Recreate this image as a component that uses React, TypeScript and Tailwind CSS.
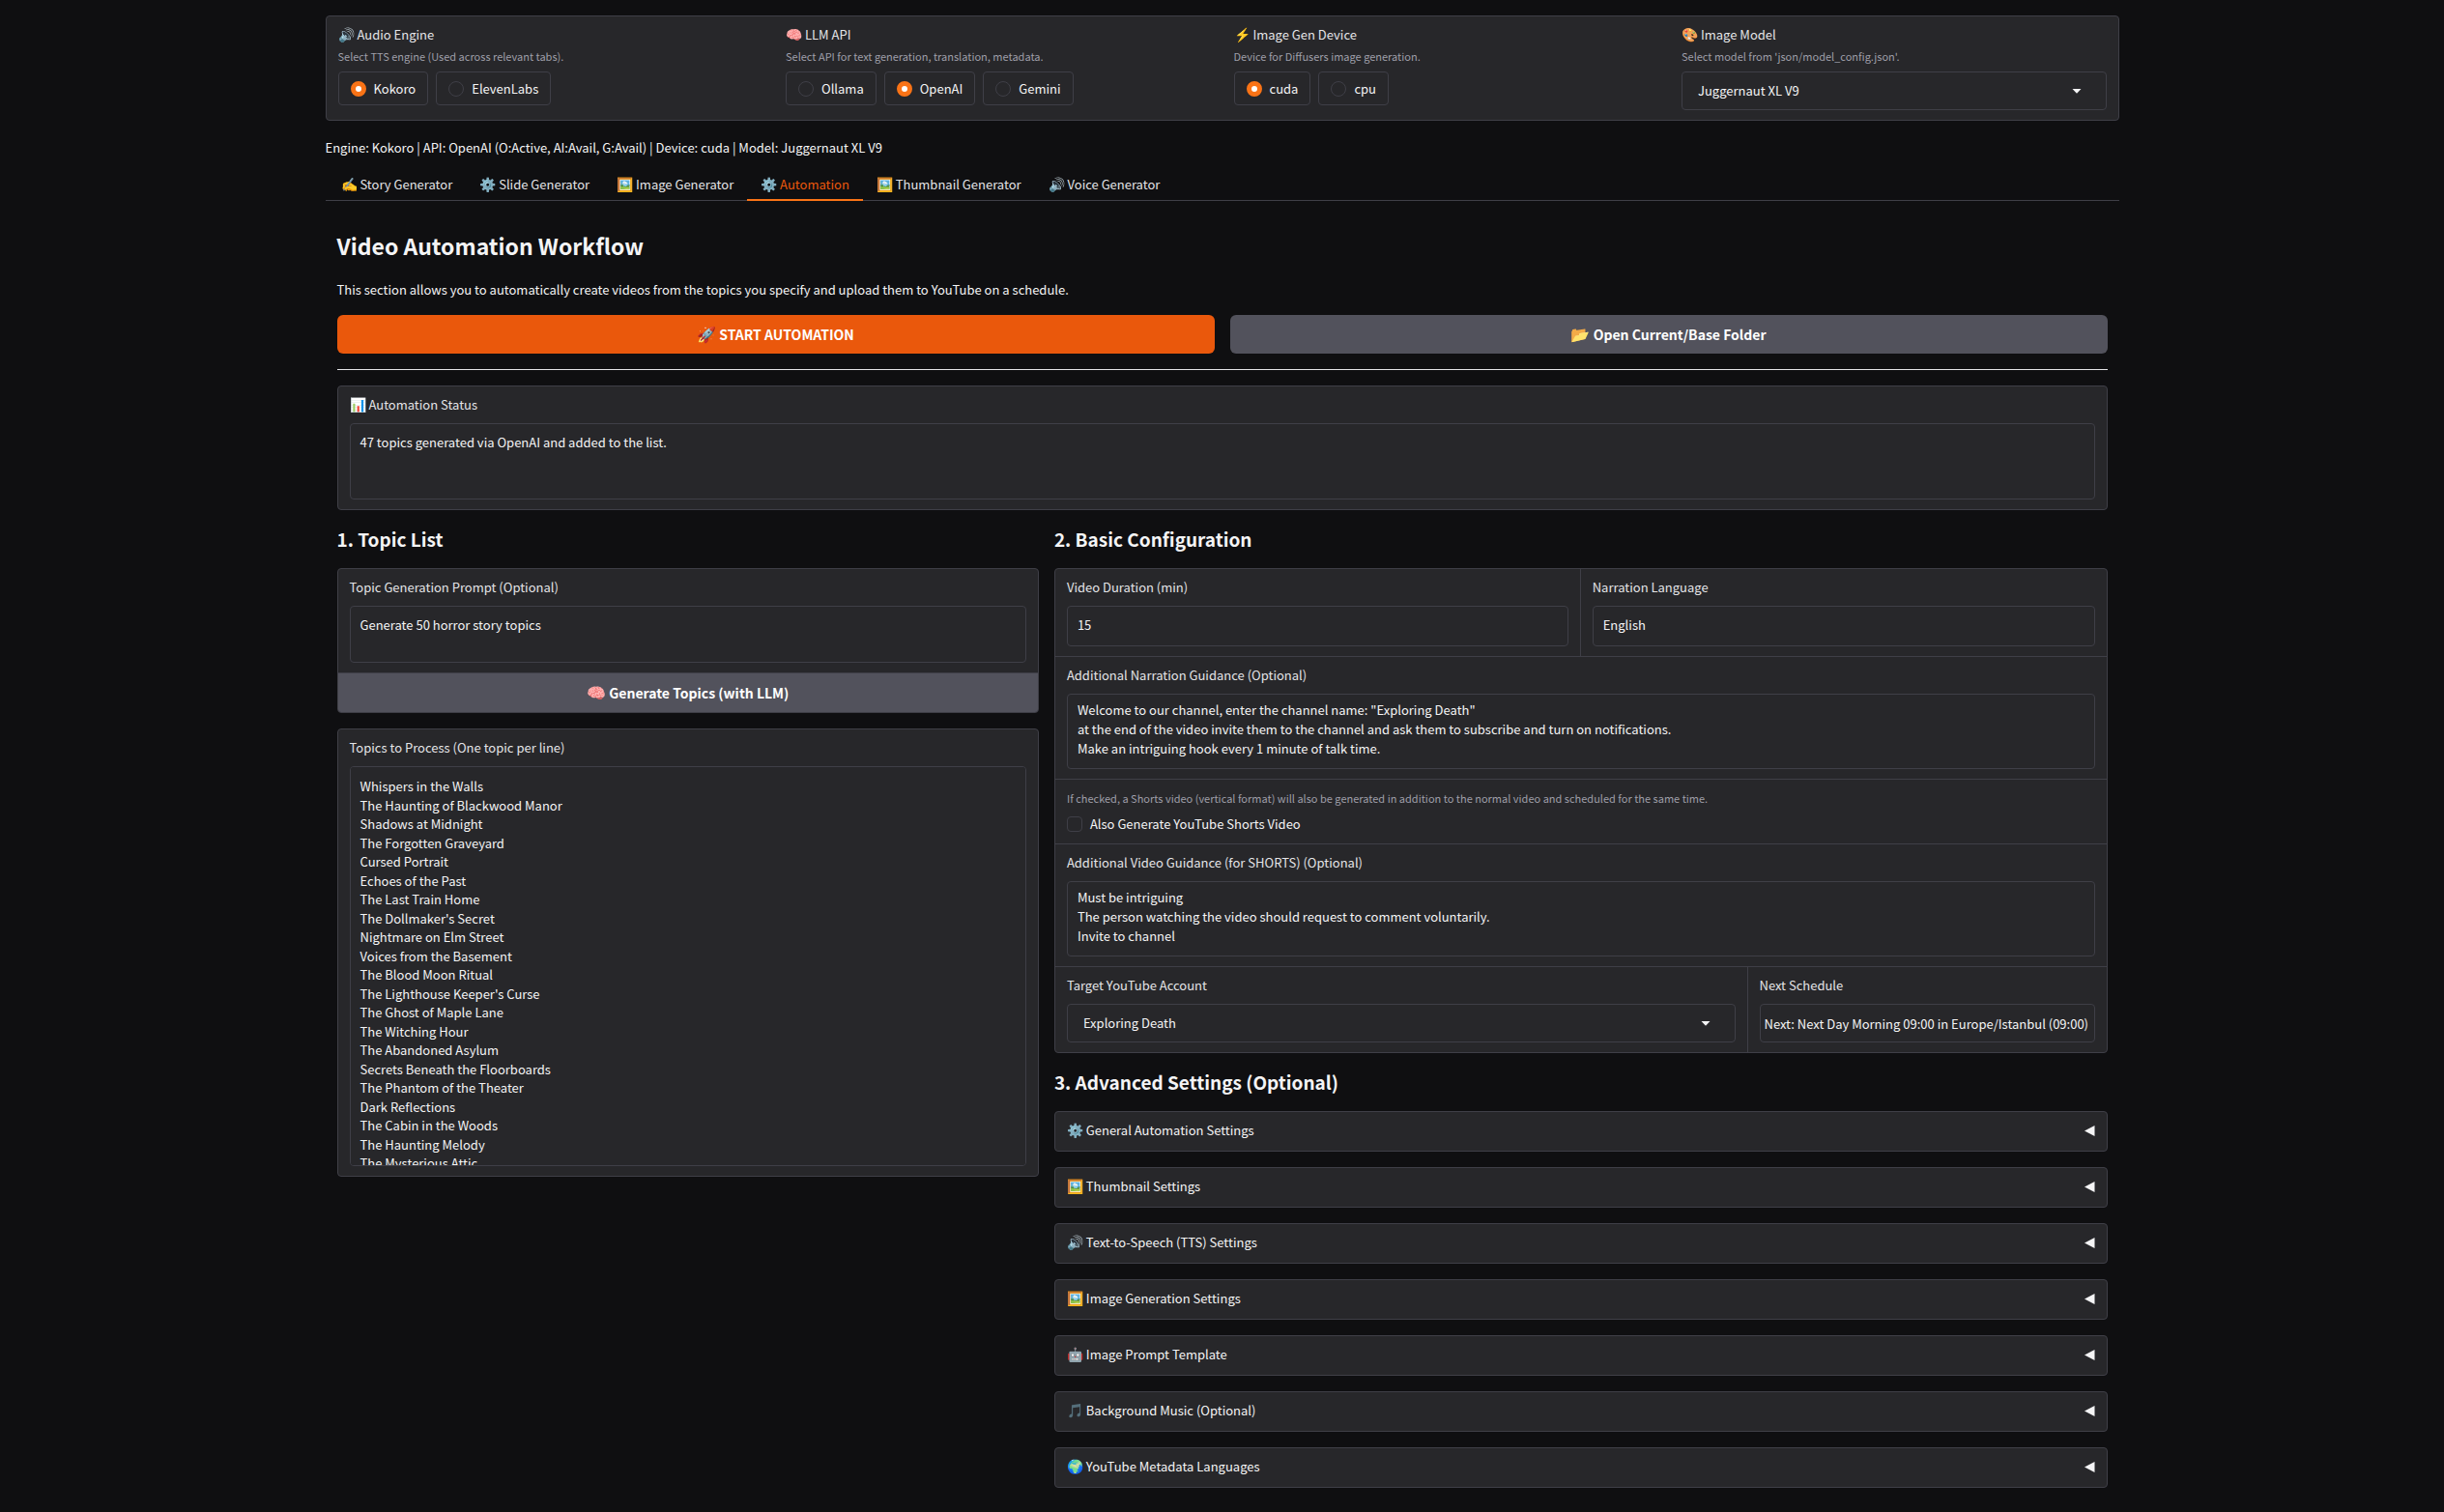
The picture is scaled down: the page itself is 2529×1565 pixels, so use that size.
import { useState, type ReactNode } from 'react';

const TABS = [
  { icon: '✍️', name: 'Story Generator' },
  { icon: '⚙️', name: 'Slide Generator' },
  { icon: '🖼️', name: 'Image Generator' },
  { icon: '⚙️', name: 'Automation' },
  { icon: '🖼️', name: 'Thumbnail Generator' },
  { icon: '🔊', name: 'Voice Generator' },
];

const TOPICS = [
  'Whispers in the Walls',
  'The Haunting of Blackwood Manor',
  'Shadows at Midnight',
  'The Forgotten Graveyard',
  'Cursed Portrait',
  'Echoes of the Past',
  'The Last Train Home',
  "The Dollmaker's Secret",
  'Nightmare on Elm Street',
  'Voices from the Basement',
  'The Blood Moon Ritual',
  "The Lighthouse Keeper's Curse",
  'The Ghost of Maple Lane',
  'The Witching Hour',
  'The Abandoned Asylum',
  'Secrets Beneath the Floorboards',
  'The Phantom of the Theater',
  'Dark Reflections',
  'The Cabin in the Woods',
  'The Haunting Melody',
  'The Mysterious Attic',
];

const NARRATION = `Welcome to our channel, enter the channel name: "Exploring Death"
at the end of the video invite them to the channel and ask them to subscribe and turn on notifications.
Make an intriguing hook every 1 minute of talk time.`;

const SHORTS = `Must be intriguing
The person watching the video should request to comment voluntarily.
Invite to channel`;

const ADVANCED = [
  { icon: '⚙️', title: 'General Automation Settings' },
  { icon: '🖼️', title: 'Thumbnail Settings' },
  { icon: '🔊', title: 'Text-to-Speech (TTS) Settings' },
  { icon: '🖼️', title: 'Image Generation Settings' },
  { icon: '🤖', title: 'Image Prompt Template' },
  { icon: '🎵', title: 'Background Music (Optional)' },
  { icon: '🌍', title: 'YouTube Metadata Languages' },
];

const card = 'overflow-hidden rounded border border-zinc-700 bg-zinc-800';
const field = 'block w-full rounded border border-zinc-700 bg-zinc-800 text-zinc-100 outline-none focus:border-orange-500';
const input = `${field} px-2.5 pt-[9px] pb-[11px]`;
const area = `${field} resize-none px-2.5 leading-5 [scrollbar-width:none]`;
const action = 'text-[14px] font-semibold text-white';
const heading = 'mb-4 text-[19px] leading-7 font-semibold';

function Emoji({ children }: { children: string }) {
  return <span className="text-[14px] leading-none">{children}</span>;
}

interface FieldProps {
  id: string;
  icon?: string;
  label: string;
  info?: string;
  children: ReactNode;
}

function Field({ id, icon, label, info, children }: FieldProps) {
  return (
    <div className="px-3 py-2.5">
      <label htmlFor={id} className={`block leading-[18px] text-zinc-200 ${info ? 'mb-1.5' : 'mb-2.5'}`}>
        {icon && <Emoji>{icon}</Emoji>} {label}
      </label>
      {info && <p className="mb-2 text-[11px] leading-[15px] text-zinc-400">{info}</p>}
      {children}
    </div>
  );
}

interface RadioFieldProps {
  name: string;
  icon: string;
  label: string;
  info: string;
  options: string[];
  initial: string;
}

function RadioField({ name, icon, label, info, options, initial }: RadioFieldProps) {
  const [value, setValue] = useState(initial);

  return (
    <fieldset className="px-3 py-2.5">
      <legend className="float-left mb-1.5 w-full leading-[18px] text-zinc-200">
        <Emoji>{icon}</Emoji> {label}
      </legend>
      <p className="clear-both mb-2 text-[11px] leading-[15px] text-zinc-400">{info}</p>
      <div className="flex flex-wrap gap-2">
        {options.map((option) => (
          <label key={option} className="flex h-[35px] items-center gap-2 rounded border border-zinc-700 px-3 text-zinc-100">
            <input
              type="radio"
              name={name}
              checked={value === option}
              onChange={() => setValue(option)}
              className="size-4 appearance-none rounded-full border border-zinc-700 checked:border-[5px] checked:border-[#f97316] checked:bg-white"
            />
            {option}
          </label>
        ))}
      </div>
    </fieldset>
  );
}

function Select({ id, options }: { id: string; options: string[] }) {
  return (
    <div className="relative">
      <select id={id} className={`${field} h-10 appearance-none px-4`}>
        {options.map((option) => (
          <option key={option}>{option}</option>
        ))}
      </select>
      <svg viewBox="0 0 18 18" className="pointer-events-none absolute top-1/2 right-[22px] size-[18px] -translate-y-1/2 fill-zinc-100">
        <path d="M4.5 7h9L9 11.7z" />
      </svg>
    </div>
  );
}

function Accordion({ icon, title }: { icon: string; title: string }) {
  return (
    <button type="button" className="flex w-full items-center justify-between rounded border border-zinc-700 bg-zinc-800 px-3 pt-[9px] pb-[11px] text-left text-zinc-100">
      <span>
        <Emoji>{icon}</Emoji> {title}
      </span>
      <svg viewBox="0 0 11 11" className="size-[11px] fill-zinc-100">
        <path d="M0 5.5L10.5 0v11z" />
      </svg>
    </button>
  );
}

export default function App() {
  const [tab, setTab] = useState('Automation');
  const [shorts, setShorts] = useState(false);

  return (
    <div className="min-h-screen bg-[#0f0f11] font-['Noto_Sans_CJK_SC',sans-serif] text-[13px] leading-5 text-zinc-100">
      <main className="mx-auto max-w-[1920px] px-8 pt-4 pb-6">
        {/* Global engine settings */}
        <section className={`${card} grid grid-cols-4`}>
          <RadioField
            name="audio"
            icon="🔊"
            label="Audio Engine"
            info="Select TTS engine (Used across relevant tabs)."
            options={['Kokoro', 'ElevenLabs']}
            initial="Kokoro"
          />
          <RadioField
            name="llm"
            icon="🧠"
            label="LLM API"
            info="Select API for text generation, translation, metadata."
            options={['Ollama', 'OpenAI', 'Gemini']}
            initial="OpenAI"
          />
          <RadioField
            name="device"
            icon="⚡"
            label="Image Gen Device"
            info="Device for Diffusers image generation."
            options={['cuda', 'cpu']}
            initial="cuda"
          />
          <Field id="model" icon="🎨" label="Image Model" info="Select model from 'json/model_config.json'.">
            <Select id="model" options={['Juggernaut XL V9']} />
          </Field>
        </section>

        <p className="mt-4 leading-6">
          Engine: Kokoro | API: OpenAI (O:Active, AI:Avail, G:Avail) | Device: cuda | Model: Juggernaut XL V9
        </p>

        <nav className="mt-[11px] flex h-8 border-b border-zinc-700 px-0.5">
          {TABS.map(({ icon, name }) => (
            <button
              key={name}
              type="button"
              onClick={() => setTab(name)}
              className={`-mb-px border-b-2 px-3.5 ${tab === name ? 'border-[#f97316] text-[#ea580c]' : 'border-transparent text-zinc-200'}`}
            >
              <Emoji>{icon}</Emoji> {name}
            </button>
          ))}
        </nav>

        <div className="px-3">
          <h1 className="mt-[30px] text-[23px] leading-8 font-semibold">Video Automation Workflow</h1>
          <p className="mt-5">
            This section allows you to automatically create videos from the topics you specify and upload them to YouTube on a schedule.
          </p>

          <div className="mt-4 grid grid-cols-2 gap-4">
            <button type="button" className={`${action} h-10 rounded-md bg-[#ea580c]`}>
              <span className="text-base leading-none">🚀</span> START AUTOMATION
            </button>
            <button type="button" className={`${action} h-10 rounded-md bg-zinc-600`}>
              <span className="text-base leading-none">📂</span> Open Current/Base Folder
            </button>
          </div>

          <hr className="my-4 border-zinc-200" />

          <section className={card}>
            <Field id="status" icon="📊" label="Automation Status">
              <textarea id="status" rows={3} readOnly className={`${area} pt-[9px] pb-2`} value="47 topics generated via OpenAI and added to the list." />
            </Field>
          </section>

          <div className="mt-4 flex items-start gap-4">
            <div className="flex-2">
              <h2 className={heading}>1. Topic List</h2>
              <section className={card}>
                <Field id="prompt" label="Topic Generation Prompt (Optional)">
                  <textarea id="prompt" rows={2} className={`${area} pt-[9px] pb-2`} defaultValue="Generate 50 horror story topics" />
                </Field>
                <button type="button" className={`${action} h-[41px] w-full border-t border-zinc-700 bg-zinc-600`}>
                  <span className="text-base leading-none">🧠</span> Generate Topics (with LLM)
                </button>
              </section>

              <section className={`${card} mt-4`}>
                <Field id="topics" label="Topics to Process (One topic per line)">
                  <textarea
                    id="topics"
                    className={`${field} h-[414px] resize-none px-2.5 py-2.5 leading-normal [scrollbar-width:none]`}
                    defaultValue={TOPICS.join('\n')}
                  />
                </Field>
              </section>
            </div>

            <div className="flex-3">
              <h2 className={heading}>2. Basic Configuration</h2>
              <section className={`${card} divide-y divide-zinc-700`}>
                <div className="grid grid-cols-2 divide-x divide-zinc-700">
                  <Field id="duration" label="Video Duration (min)">
                    <input id="duration" type="number" className={input} defaultValue={15} />
                  </Field>
                  <Field id="language" label="Narration Language">
                    <input id="language" type="text" className={input} defaultValue="English" />
                  </Field>
                </div>

                <Field id="narration" label="Additional Narration Guidance (Optional)">
                  <textarea id="narration" rows={3} className={`${area} pt-1.5 pb-2.5`} defaultValue={NARRATION} />
                </Field>

                <div className="px-3 py-2.5">
                  <p className="mb-2 text-[11px] leading-[18px] text-zinc-400">
                    If checked, a Shorts video (vertical format) will also be generated in addition to the normal video and scheduled for the same time.
                  </p>
                  <label className="flex items-center gap-2">
                    <input
                      type="checkbox"
                      checked={shorts}
                      onChange={(e) => setShorts(e.target.checked)}
                      className="size-4 appearance-none rounded border border-zinc-700 checked:bg-[#f97316]"
                    />
                    Also Generate YouTube Shorts Video
                  </label>
                </div>

                <Field id="shorts" label="Additional Video Guidance (for SHORTS) (Optional)">
                  <textarea id="shorts" rows={3} className={`${area} pt-1.5 pb-2.5`} defaultValue={SHORTS} />
                </Field>

                <div className="flex divide-x divide-zinc-700">
                  <div className="flex-1">
                    <Field id="account" label="Target YouTube Account">
                      <Select id="account" options={['Exploring Death']} />
                    </Field>
                  </div>
                  <div className="w-[371px]">
                    <Field id="schedule" label="Next Schedule">
                      <input
                        id="schedule"
                        type="text"
                        readOnly
                        className={`${field} h-10 px-1`}
                        value="Next: Next Day Morning 09:00 in Europe/Istanbul (09:00)"
                      />
                    </Field>
                  </div>
                </div>
              </section>

              <h2 className={`${heading} mt-4`}>3. Advanced Settings (Optional)</h2>
              <div className="flex flex-col gap-4">
                {ADVANCED.map(({ icon, title }) => (
                  <Accordion key={title} icon={icon} title={title} />
                ))}
              </div>
            </div>
          </div>
        </div>
      </main>
    </div>
  );
}
